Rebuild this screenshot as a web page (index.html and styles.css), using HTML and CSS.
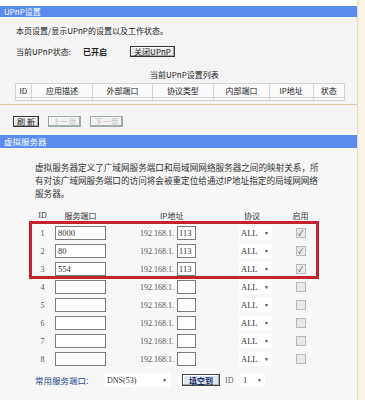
FILE: index.html
```html
<!DOCTYPE html>
<html lang="zh-CN">
<head>
    <meta charset="UTF-8">
    <meta name="viewport" content="width=device-width, initial-scale=1.0">
    <link rel="stylesheet" href="styles.css">
</head>
<body>
<div class="page">
    <div class="main">
        <div class="panel upnp">
            <div class="panel-title">UPnP设置</div>
            <div class="panel-body">
                <p class="desc">本页设置/显示UPnP的设置以及工作状态。</p>
                <div class="status-row">
                    <span class="status-label">当前UPnP状态:</span>
                    <b class="status-value">已开启</b>
                    <button class="btn">关闭UPnP</button>
                </div>
                <div class="list-caption">当前UPnP设置列表</div>
                <table class="upnp-table">
                    <tr>
                        <th class="c-id">ID</th>
                        <th class="c-desc">应用描述</th>
                        <th class="c-ext">外部端口</th>
                        <th class="c-proto">协议类型</th>
                        <th class="c-int">内部端口</th>
                        <th class="c-ip">IP地址</th>
                        <th class="c-state">状态</th>
                    </tr>
                    <tr class="empty-row">
                        <td></td><td></td><td></td><td></td><td></td><td></td><td></td>
                    </tr>
                </table>
            </div>
            <div class="btn-row">
                <button class="btn">刷 新</button>
                <button class="btn disabled">上一页</button>
                <button class="btn disabled">下一页</button>
            </div>
        </div>

        <div class="panel vserver">
            <div class="panel-title">虚拟服务器</div>
            <div class="panel-body">
                <p class="vs-desc">虚拟服务器定义了广域网服务端口和局域网网络服务器之间的映射关系，所<br>有对该广域网服务端口的访问将会被重定位给通过IP地址指定的局域网网络<br>服务器。</p>

                <div class="vs-table">
                    <div class="vs-row vs-head">
                        <span class="col-id">ID</span>
                        <span class="col-port">服务端口</span>
                        <span class="col-ip">IP地址</span>
                        <span class="col-proto">协议</span>
                        <span class="col-on">启用</span>
                    </div>
                    <div class="vs-row">
                        <span class="col-id">1</span>
                        <span class="col-port"><input class="port-input" value="8000"></span>
                        <span class="col-ip">192.168.1.<input class="octet-input" value="113"></span>
                        <span class="col-proto"><span class="sel">ALL<i>▼</i></span></span>
                        <span class="col-on"><span class="check on">✓</span></span>
                    </div>
                    <div class="vs-row">
                        <span class="col-id">2</span>
                        <span class="col-port"><input class="port-input" value="80"></span>
                        <span class="col-ip">192.168.1.<input class="octet-input" value="113"></span>
                        <span class="col-proto"><span class="sel">ALL<i>▼</i></span></span>
                        <span class="col-on"><span class="check on">✓</span></span>
                    </div>
                    <div class="vs-row">
                        <span class="col-id">3</span>
                        <span class="col-port"><input class="port-input" value="554"></span>
                        <span class="col-ip">192.168.1.<input class="octet-input" value="113"></span>
                        <span class="col-proto"><span class="sel">ALL<i>▼</i></span></span>
                        <span class="col-on"><span class="check on">✓</span></span>
                    </div>
                    <div class="vs-row">
                        <span class="col-id">4</span>
                        <span class="col-port"><input class="port-input" value=""></span>
                        <span class="col-ip">192.168.1.<input class="octet-input" value=""></span>
                        <span class="col-proto"><span class="sel">ALL<i>▼</i></span></span>
                        <span class="col-on"><span class="check"></span></span>
                    </div>
                    <div class="vs-row">
                        <span class="col-id">5</span>
                        <span class="col-port"><input class="port-input" value=""></span>
                        <span class="col-ip">192.168.1.<input class="octet-input" value=""></span>
                        <span class="col-proto"><span class="sel">ALL<i>▼</i></span></span>
                        <span class="col-on"><span class="check"></span></span>
                    </div>
                    <div class="vs-row">
                        <span class="col-id">6</span>
                        <span class="col-port"><input class="port-input" value=""></span>
                        <span class="col-ip">192.168.1.<input class="octet-input" value=""></span>
                        <span class="col-proto"><span class="sel">ALL<i>▼</i></span></span>
                        <span class="col-on"><span class="check"></span></span>
                    </div>
                    <div class="vs-row">
                        <span class="col-id">7</span>
                        <span class="col-port"><input class="port-input" value=""></span>
                        <span class="col-ip">192.168.1.<input class="octet-input" value=""></span>
                        <span class="col-proto"><span class="sel">ALL<i>▼</i></span></span>
                        <span class="col-on"><span class="check"></span></span>
                    </div>
                    <div class="vs-row">
                        <span class="col-id">8</span>
                        <span class="col-port"><input class="port-input" value=""></span>
                        <span class="col-ip">192.168.1.<input class="octet-input" value=""></span>
                        <span class="col-proto"><span class="sel">ALL<i>▼</i></span></span>
                        <span class="col-on"><span class="check"></span></span>
                    </div>
                    <div class="highlight"></div>
                </div>

                <div class="common-row">
                    <span class="common-label">常用服务端口:</span>
                    <span class="sel wide">DNS(53)<i>▼</i></span>
                    <button class="btn fill">填空到</button>
                    <span class="id-label">ID</span>
                    <span class="sel small">1<i>▼</i></span>
                </div>
            </div>
        </div>
    </div>
    <div class="side"></div>
</div>
</body>
</html>
```

FILE: styles.css
```css
body {
    margin: 0;
    font-family: "Noto Sans CJK SC", "Liberation Sans", sans-serif;
    font-size: 8px;
    color: #222;
    background-color: #ffffff;
}

.page {
    display: flex;
    width: 365px;
    height: 400px;
    overflow: hidden;
}

.main {
    width: 357px;
    display: flex;
    flex-direction: column;
}

.side {
    flex: 1;
    background-color: #f8f3e4;
    border-left: 1px solid #e6dcc2;
}

.panel {
    background-color: #f4f4f4;
}

.panel.upnp {
    margin-top: 6px;
}

.panel-title {
    height: 11px;
    line-height: 11px;
    padding-left: 4px;
    background-color: #5b8def;
    color: #ffffff;
    font-size: 8px;
}

.upnp .panel-body {
    padding-left: 15px;
    border-bottom: 1px solid #dcc9a8;
    padding-bottom: 3px;
}

.desc {
    margin: 0;
    padding-top: 8px;
    padding-left: 1px;
    line-height: 12px;
}

.status-row {
    display: flex;
    align-items: center;
    height: 12px;
    margin-top: 8px;
    padding-left: 1px;
}

.status-label {
    width: 67px;
}

.status-value {
    width: 47px;
    font-weight: bold;
}

.btn {
    font-family: "Noto Sans CJK SC", "Liberation Sans", sans-serif;
    font-size: 8px;
    line-height: 9px;
    padding: 0;
    height: 11px;
    white-space: nowrap;
    border: 1px solid #333;
    background-color: #e9e9e9;
    color: #222;
    box-shadow: inset -1px -1px 0 #aaa, inset 1px 1px 0 #fff;
}

.status-row .btn {
    width: 45px;
}

.list-caption {
    margin-top: 12px;
    line-height: 12px;
    padding-left: 135px;
}

.upnp-table {
    margin-top: 2px;
    border-collapse: collapse;
    width: 330px;
    background-color: #fafafa;
}

.upnp-table th {
    font-weight: normal;
    height: 13px;
    padding: 0;
    border: 1px solid #d4d4d4;
    text-align: center;
}

.upnp-table td {
    height: 2px;
    padding: 0;
    border: 1px solid #d4d4d4;
}

.c-id { width: 15px; }
.c-desc { width: 62px; }
.c-ext { width: 60px; }
.c-proto { width: 62px; }
.c-int { width: 56px; }
.c-ip { width: 44px; }
.c-state { width: 31px; }

.btn-row {
    display: flex;
    gap: 9px;
    padding: 11px 0 3px 13px;
    border-bottom: 5px solid #ffffff;
}

.btn-row .btn {
    width: 26px;
}

.btn-row .btn.disabled {
    width: 33px;
    color: #bbb;
    border-color: #9aa;
    background-color: #f2f2f2;
}

.vserver {
    flex: 1;
    background-color: #f7f7f7;
}

.vserver .panel-title {
    height: 13px;
    line-height: 13px;
    font-size: 8.5px;
}

.vserver .panel-body {
    padding-left: 33px;
}

.vs-desc {
    margin: 0;
    padding-top: 13px;
    padding-left: 2px;
    font-size: 8.6px;
    line-height: 13px;
    color: #333;
    white-space: nowrap;
}

.vs-table {
    position: relative;
    margin-top: 8px;
}

.vs-row {
    display: grid;
    grid-template-columns: 22px 51px 133px 46px 31px;
    align-items: center;
    height: 18px;
}

.vs-head {
    height: 14px;
    margin-bottom: 2px;
}

.vs-head span {
    color: #333;
}

.col-id {
    text-align: center;
    padding-right: 3px;
    font-family: "Liberation Serif", serif;
    color: #555;
}

.col-port {
    display: flex;
    align-items: center;
}

.vs-head .col-port {
    justify-content: center;
}

.col-ip {
    display: flex;
    align-items: center;
    padding-left: 34px;
    font-family: "Liberation Serif", serif;
    color: #555;
}

.vs-head .col-ip {
    padding-left: 54px;
    font-family: "Noto Sans CJK SC", sans-serif;
}

.vs-head .col-proto {
    padding-left: 5px;
}

.col-on {
    display: flex;
    justify-content: center;
}

.port-input,
.octet-input {
    box-sizing: border-box;
    height: 14px;
    border: 1px solid #7a7a7a;
    background-color: #ffffff;
    font-family: "Liberation Serif", serif;
    font-size: 8.5px;
    padding: 0 2px;
    color: #333;
}

.port-input {
    width: 51px;
}

.octet-input {
    width: 19px;
    margin-left: 3px;
    padding: 0 1px;
}

.sel {
    display: inline-flex;
    align-items: center;
    justify-content: space-between;
    box-sizing: border-box;
    width: 33px;
    height: 14px;
    padding: 0 3px 0 2px;
    background-color: #ffffff;
    font-family: "Liberation Serif", serif;
    font-size: 8.5px;
    color: #333;
}

.sel i {
    font-style: normal;
    font-size: 5px;
    color: #444;
}

.check {
    box-sizing: border-box;
    width: 10px;
    height: 10px;
    border: 1px solid #b8b8b8;
    background-color: #e8e8e8;
    font-size: 8px;
    line-height: 8px;
    text-align: center;
    color: #556;
}

.highlight {
    position: absolute;
    left: -4px;
    top: 13px;
    width: 284px;
    height: 52px;
    border: 3px solid #c7212d;
}

.common-row {
    display: flex;
    align-items: center;
    height: 16px;
    margin-top: 4px;
    padding-left: 2px;
}

.common-label {
    width: 70px;
    color: #2a4a8a;
    font-size: 8.5px;
}

.sel.wide {
    width: 65px;
    font-size: 8px;
}

.btn.fill {
    margin-left: 12px;
    width: 38px;
    height: 12px;
    background-color: #dfe6f3;
    border-color: #444;
    color: #1d2f6a;
    font-weight: bold;
}

.id-label {
    margin-left: 5px;
    width: 16px;
    font-family: "Liberation Serif", serif;
    color: #666;
}

.sel.small {
    width: 24px;
}
```
